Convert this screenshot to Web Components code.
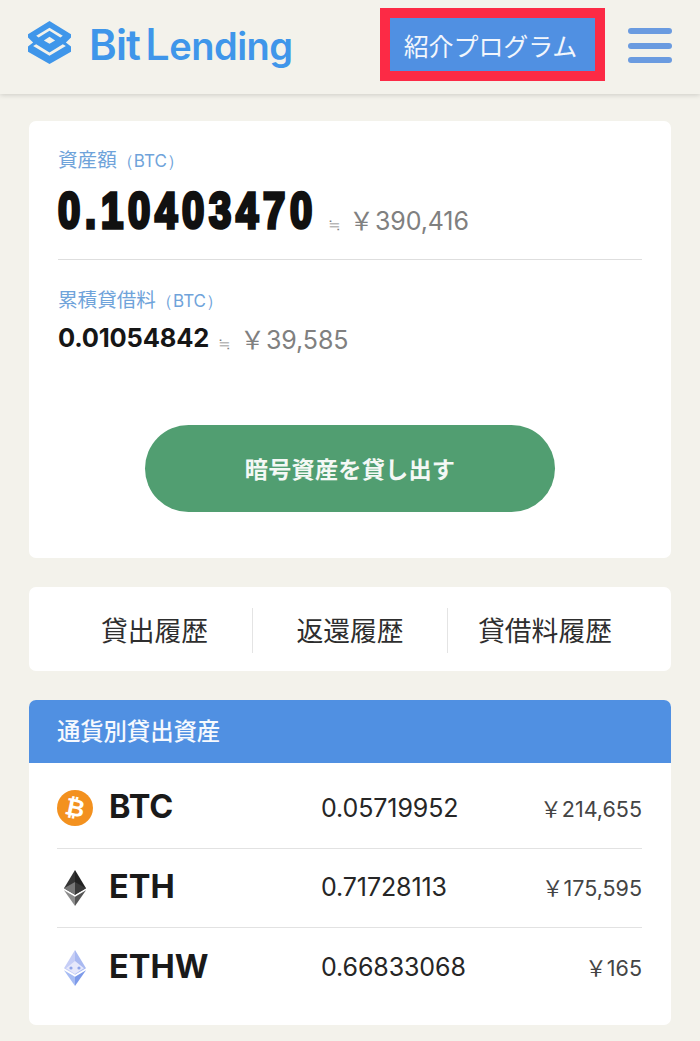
<!DOCTYPE html>
<html lang="ja"><head><meta charset="utf-8"><title>BitLending</title>
<style>
html,body{margin:0;padding:0;background:#f3f2eb;font-family:"Inter","Liberation Sans","Noto Sans CJK JP",sans-serif;}
body{width:700px;height:1041px;overflow:hidden}
</style></head><body>
<bl-header></bl-header>
<bl-main>
  <bl-summary></bl-summary>
  <bl-history></bl-history>
  <bl-assets></bl-assets>
</bl-main>
<script>
const FONT='"Inter","Liberation Sans","Noto Sans CJK JP",sans-serif';
function def(name, html){
  customElements.define(name, class extends HTMLElement{
    constructor(){super();this.attachShadow({mode:'open'}).innerHTML=html;}
  });
}
def('bl-header',`<style>
:host{display:flex;align-items:flex-start;box-sizing:border-box;height:94px;background:#f3f2eb;box-shadow:0 1px 5px rgba(0,0,0,.16);padding:8px 28px 0;position:relative}
.logo{display:flex;align-items:center;gap:18px;width:352px;height:70px;flex:none}
.logo svg{margin-top:-1px}
.word{font:600 42px/1 "Inter","Liberation Sans",sans-serif;color:#3f96ea;letter-spacing:-.8px;white-space:nowrap;display:flex;align-items:baseline;padding-top:2px}
.word .l{font-size:44px;font-weight:500;margin:0 0 0 5px}
.word .rest{font-size:38px;letter-spacing:-.5px}
.btn{box-sizing:border-box;width:225px;height:73px;flex:none;border:10.5px solid #fc2a45;background:#5090e2;color:#f2f6fc;font:400 25px/1 "Noto Sans CJK JP",sans-serif;display:flex;align-items:center;justify-content:center;white-space:nowrap;letter-spacing:-.1px;padding:2px 4px 0 0}
.menu{margin:20px 0 0 23px;width:45px;display:flex;flex-direction:column;gap:8.5px}
.menu i{display:block;height:6px;border-radius:3px;background:#6a9be0}
</style>
<div class="logo">
<svg width="43" height="43" viewBox="0 0 42 42" aria-hidden="true">
<path fill="#3f96ea" d="M21 0 42 13V16L37 21 42 25V30L21 42 0 30V25L5 21 0 16V13Z"/>
<path fill="#f3f2eb" d="M21 6.5 34 14.4 31.6 16 21 9.6 10.4 16 8 14.4Z"/>
<path fill="#f3f2eb" d="M5 24.4 8 22.8 21 30.8 34 22.8 37 24.4 21 34Z"/>
<path fill="#f3f2eb" d="M21 15.5 26.5 19 21 22.3 15.5 19Z"/>
</svg>
<span class="word">Bit<span class="l">L</span><span class="rest">ending</span></span>
</div>
<div class="btn">紹介プログラム</div>
<div class="menu"><i></i><i></i><i></i></div>`);

def('bl-main',`<style>
:host{display:flex;flex-direction:column;gap:29px;padding:27px 29px 0;box-sizing:border-box;width:700px}
</style><slot></slot>`);

def('bl-summary',`<style>
:host{display:block;box-sizing:border-box;height:437px;background:#fff;border-radius:7px;padding:26px 29px 0;font-family:${FONT}}
.lab{font:400 19.6px/24px "Noto Sans CJK JP",sans-serif;color:#6fa3da;white-space:nowrap}
.lab span{font-family:"Inter","Liberation Sans",sans-serif;font-size:17px}
.row1{display:flex;align-items:baseline;height:60px;margin-top:8px;white-space:nowrap}
.big{display:inline-block;font:700 50px/60px "Liberation Sans",sans-serif;color:#111;letter-spacing:5.95px;-webkit-text-stroke:3.5px #111;transform:scaleX(.8);transform-origin:0 50%;margin-right:-64.7px}
.yen{color:#808080;font:400 25px/1 "Inter","Liberation Sans",sans-serif;letter-spacing:-.1px;position:relative;top:2px}
.yen b{font:400 25px/1 "Noto Sans CJK JP",sans-serif;margin-right:1px}
.ap{color:#808080;font:400 16px/1 "Noto Sans CJK JP",sans-serif;margin:0 8px 0 11px;position:relative;top:2px}
hr{border:0;border-top:1px solid #dedede;margin:18px 0 0}
.l2{margin-top:27px}
.row2{display:flex;align-items:baseline;margin-top:9px;height:32px;white-space:nowrap}
.mid{font:700 25.5px/32px "Inter","Liberation Sans",sans-serif;color:#161616;letter-spacing:-.2px}
.row2 .ap{margin:0 9px 0 9px}
.cta{display:flex;align-items:center;justify-content:center;width:410px;height:87px;margin:71px auto 0;border-radius:44px;background:#519e71;color:#f4f8f5;font:700 23.2px/1 "Noto Sans CJK JP",sans-serif;letter-spacing:.2px}
</style>
<div class="lab">資産額<span>（BTC）</span></div>
<div class="row1"><span class="big">0.10403470</span><span class="ap">≒</span><span class="yen"><b>￥</b>390,416</span></div>
<hr>
<div class="lab l2">累積貸借料<span>（BTC）</span></div>
<div class="row2"><span class="mid">0.01054842</span><span class="ap">≒</span><span class="yen"><b>￥</b>39,585</span></div>
<div class="cta">暗号資産を貸し出す</div>`);

def('bl-history',`<style>
:host{display:flex;align-items:center;box-sizing:border-box;height:84px;background:#fff;border-radius:7px;padding:3px 29px 0 28px}
div{flex:none;width:195px;height:45px;display:flex;align-items:center;justify-content:center;font:400 26.8px/1 "Noto Sans CJK JP",sans-serif;color:#2e2e2e;white-space:nowrap;box-sizing:border-box}
div+div{border-left:1px solid #e4e4e4}
</style><div>貸出履歴</div><div>返還履歴</div><div>貸借料履歴</div>`);

def('bl-assets',`<style>
:host{display:block;box-sizing:border-box;height:325px;background:#fff;border-radius:7px;overflow:hidden}
h2{margin:0;height:63px;background:#5090e2;color:#f6f9fe;font:500 23.4px/60px "Noto Sans CJK JP",sans-serif;padding-left:28px;letter-spacing:-.1px}
.list{padding:6px 29px 0 28px}
</style><h2>通貨別貸出資産</h2>
<div class="list">
<bl-coin name="BTC" amt="0.05719952" yen="214,655"><svg slot="icon" width="36" height="36" viewBox="0 0 36 36"><circle cx="18" cy="18" r="18" fill="#f3911f"/><text x="18" y="26" text-anchor="middle" transform="rotate(12 18 18)" font-family="Liberation Sans" font-weight="700" font-size="24" fill="#fff">₿</text></svg></bl-coin>
<bl-coin name="ETH" amt="0.71728113" yen="175,595"><svg slot="icon" width="36" height="36" viewBox="0 0 36 36"><path fill="#343434" d="M18 0 7 18.2 18 24.7Z"/><path fill="#222" d="M18 0 29 18.2 18 24.7Z"/><path fill="#777" d="M18 12 7 18.2 18 24.7Z"/><path fill="#3a3a3a" d="M18 12 29 18.2 18 24.7Z"/><path fill="#8c8c8c" d="M7 20.3 18 36V26.8Z"/><path fill="#555" d="M29 20.3 18 36V26.8Z"/></svg></bl-coin>
<bl-coin name="ETHW" amt="0.66833068" yen="165"><svg slot="icon" width="36" height="36" viewBox="0 0 36 36"><path fill="#c5cdf6" d="M18 0 7 18.2 18 24.7Z"/><path fill="#a9b9f1" d="M18 0 29 18.2 18 24.7Z"/><path fill="#e6e8fb" d="M18 11 9 18.2 18 24 27 18.2Z"/><circle cx="14" cy="18" r="1.6" fill="#8fa5ea"/><circle cx="22" cy="18" r="1.6" fill="#8fa5ea"/><path fill="#a7bcf3" d="M7 20.3 18 36V26.8Z"/><path fill="#7d9ae9" d="M29 20.3 18 36V26.8Z"/></svg></bl-coin>
</div>`);

def('bl-coin',`<style>
:host{display:flex;align-items:center;height:79.5px;border-bottom:1px solid #e2e2e2;box-sizing:border-box}
:host(:last-child){border-bottom:0}
.ic{width:36px;height:36px;flex:none;margin-right:16px}
.name{width:212px;flex:none;font:700 32.5px/1 "Inter","Liberation Sans",sans-serif;color:#1a1a1a;position:relative;top:-1px}
.amt{font:400 25px/1 "Inter","Liberation Sans",sans-serif;color:#262626;letter-spacing:-.1px}
.yen{margin-left:auto;font:400 21.5px/1 "Inter","Liberation Sans",sans-serif;color:#444;white-space:nowrap}
.yen b{font:400 21.5px/1 "Noto Sans CJK JP",sans-serif}
svg{display:block}
</style><div class="ic"><slot name="icon"></slot></div><div class="name"></div><div class="amt"></div><div class="yen"><b>￥</b><span></span></div>`);

document.querySelector('bl-assets').shadowRoot.querySelectorAll('bl-coin').forEach(c=>{
  const s=c.shadowRoot;
  s.querySelector('.name').textContent=c.getAttribute('name');
  s.querySelector('.amt').textContent=c.getAttribute('amt');
  s.querySelector('.yen span').textContent=c.getAttribute('yen');
});
</script>
</body></html>
